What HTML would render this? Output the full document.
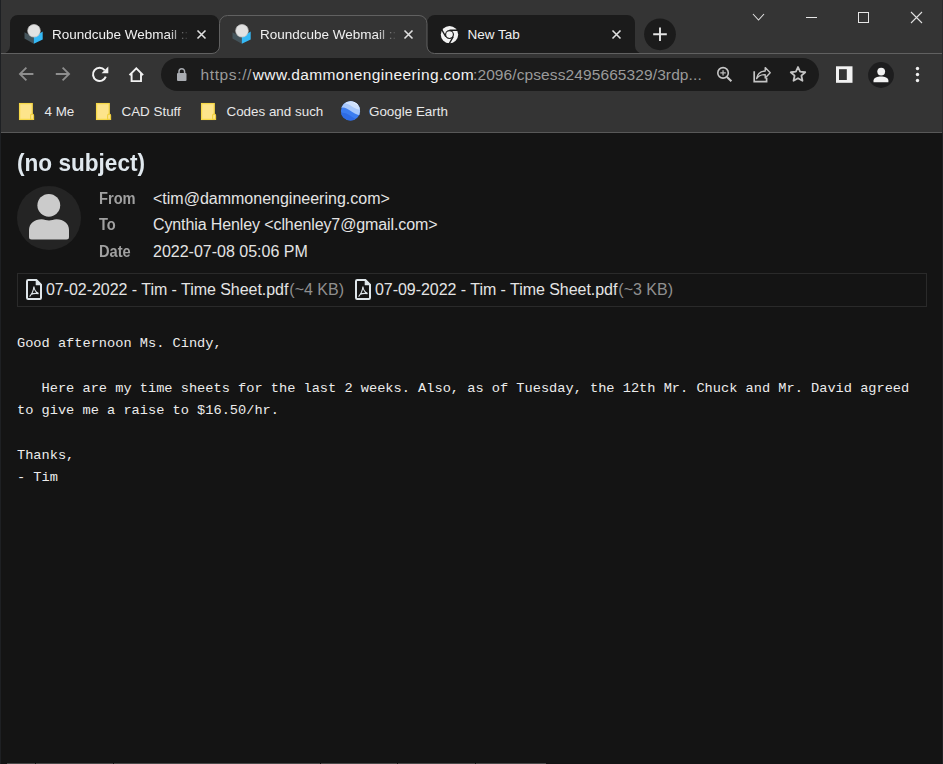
<!DOCTYPE html>
<html><head><meta charset="utf-8">
<style>
*{margin:0;padding:0;box-sizing:border-box}
html,body{width:943px;height:764px;overflow:hidden;background:#141414}
body{position:relative;font-family:"Liberation Sans",sans-serif}
.a{position:absolute;white-space:pre;line-height:1}
#chrome{position:absolute;left:0;top:0;width:943px;height:133px;background:#343434}
.t{color:#f0f0f0;font-size:13.5px}
.bm{color:#e8e8e8;font-size:13.4px}
.lbl{color:#a0a0a0;font-weight:bold;font-size:16px;transform:scaleX(0.915);transform-origin:0 0}
.val{color:#e4e4e4;font-size:16px}
.mono{font-family:"Liberation Mono",monospace;font-size:13.65px;color:#ececec}
</style></head><body>
<div id="chrome">
<svg width="943" height="133" style="position:absolute;left:0;top:0">
  <!-- window left border -->
  <rect x="0" y="0" width="1" height="764" fill="#1e2023"/>
  <!-- tab1 inactive -->
  <path d="M2.5,53.5 A7.5,7.5 0 0 0 10,46 L10,23 A8,8 0 0 1 18,15 L211,15 A8,8 0 0 1 219,23 L219,46 A7.5,7.5 0 0 0 226.5,53.5 Z" fill="#1b1b1b"/>
  <!-- tab3 inactive -->
  <path d="M419.5,53.5 A7.5,7.5 0 0 0 427,46 L427,23 A8,8 0 0 1 435,15 L627,15 A8,8 0 0 1 635,23 L635,46 A7.5,7.5 0 0 0 642.5,53.5 Z" fill="#1b1b1b"/>
  <!-- active tab -->
  <path d="M212,55 V53.5 A7.5,7.5 0 0 0 219.5,46 V23.5 A8,8 0 0 1 227.5,15.5 H419 A8,8 0 0 1 427,23.5 V46 A7.5,7.5 0 0 0 434.5,53.5 V55 Z" fill="#343434"/>
  <path d="M0,53.5 H212 A7.5,7.5 0 0 0 219.5,46 V23.5 A8,8 0 0 1 227.5,15.5 H419 A8,8 0 0 1 427,23.5 V46 A7.5,7.5 0 0 0 434.5,53.5 H943" fill="none" stroke="#616161" stroke-width="1"/>
  <!-- new tab button -->
  <circle cx="660" cy="34.3" r="15.9" fill="#1b1b1b"/>
  <path d="M660,27.5 V41 M653.2,34.3 H666.8" stroke="#e4e4e4" stroke-width="1.9"/>
  <!-- window controls -->
  <path d="M753,14 L758.5,20 L764,14" fill="none" stroke="#e0e0e0" stroke-width="1.1"/>
  <rect x="806" y="17" width="11" height="1" fill="#e6e6e6"/>
  <rect x="858.5" y="12.5" width="10" height="10" fill="none" stroke="#e6e6e6" stroke-width="1"/>
  <path d="M911,12 L922,23 M922,12 L911,23" stroke="#e0e0e0" stroke-width="1.1"/>
  <!-- tab close X -->
  <path d="M197.5,30.5 L205.5,38.5 M205.5,30.5 L197.5,38.5" stroke="#e0e0e0" stroke-width="1.6"/>
  <path d="M404.5,30.5 L412.5,38.5 M412.5,30.5 L404.5,38.5" stroke="#e0e0e0" stroke-width="1.6"/>
  <path d="M612.5,30.5 L620.5,38.5 M620.5,30.5 L612.5,38.5" stroke="#e0e0e0" stroke-width="1.6"/>
  <!-- nav icons -->
  <path d="M33.4,74 H20.2 M26.4,67.6 L19.9,74 L26.4,80.4" fill="none" stroke="#8e8e8e" stroke-width="1.8"/>
  <path d="M55.8,74 H69 M62.6,67.6 L69.1,74 L62.6,80.4" fill="none" stroke="#8e8e8e" stroke-width="1.8"/>
  <path d="M104.66,70.16 A6.6,6.6 0 1 0 105.8,76.66" fill="none" stroke="#f2f2f2" stroke-width="2"/>
  <path d="M101.6,73.3 L108.3,73.3 L108.3,66.6 Z" fill="#f2f2f2"/>
  <path d="M129.5,75.2 L136.3,68.3 L143.1,75.2 M131.6,73.3 V81.1 H141 V73.3" fill="none" stroke="#f2f2f2" stroke-width="1.9"/>
  <!-- omnibox -->
  <rect x="161" y="58" width="658" height="33" rx="16.5" fill="#1b1b1b"/>
  <path d="M179,73.5 V71.5 A2.8,2.8 0 0 1 184.6,71.5 V73.5" fill="none" stroke="#a9acb1" stroke-width="1.5"/>
  <rect x="177" y="73" width="9.5" height="8" rx="1" fill="#a9acb1"/>
  <!-- zoom -->
  <circle cx="723.05" cy="72.9" r="5.25" fill="none" stroke="#c6c6c6" stroke-width="1.6"/>
  <path d="M727,76.9 L731.4,81.3" stroke="#c6c6c6" stroke-width="2.1"/>
  <path d="M723.05,70.2 V75.6 M720.3,72.9 H725.8" stroke="#b8b8b8" stroke-width="1.3"/>
  <!-- share -->
  <path d="M754.2,71.2 V81.6 H766.6 V77.8" fill="none" stroke="#c4c4c4" stroke-width="1.7"/>
  <path d="M756.6,78.6 C757.4,73.6 760.4,71.2 765.2,71 V67.6 L770.2,72.8 L765.2,77.9 V74.6 C761.2,74.6 758.4,76 756.6,78.6 Z" fill="none" stroke="#c4c4c4" stroke-width="1.4" stroke-linejoin="round"/>
  <!-- star -->
  <path d="M798.00,67.00 L800.10,71.71 L805.23,72.25 L801.40,75.70 L802.47,80.75 L798.00,78.17 L793.53,80.75 L794.60,75.70 L790.77,72.25 L795.90,71.71 Z" fill="none" stroke="#c4c4c4" stroke-width="1.8" stroke-linejoin="round"/>
  <!-- side panel -->
  <rect x="836" y="66.3" width="16.5" height="16.5" fill="#f2f2f2"/>
  <rect x="839" y="69.2" width="7.8" height="10.8" fill="#343434"/>
  <!-- profile -->
  <circle cx="881" cy="75" r="12.9" fill="#1d1d1e"/>
  <circle cx="881.2" cy="71.6" r="3.9" fill="#f2f2f2"/>
  <path d="M873.5,82.3 V80.5 C873.5,77.8 877.5,76.4 881,76.4 C884.5,76.4 888.4,77.8 888.4,80.5 V82.3 Z" fill="#f2f2f2"/>
  <!-- menu -->
  <circle cx="917.5" cy="68.5" r="1.7" fill="#f0f0f0"/>
  <circle cx="917.5" cy="74.5" r="1.7" fill="#f0f0f0"/>
  <circle cx="917.5" cy="80.5" r="1.7" fill="#f0f0f0"/>
  <!-- bookmark folders -->
  <g id="fold"><rect x="19.6" y="103.6" width="12.6" height="15.8" fill="#fde48b" stroke="#f6d848" stroke-width="1.3"/><path d="M30.6,119.4 V115.6 A1.5,1.5 0 0 1 33.6,115.6 V119.4 Z" fill="#fde48b" stroke="#f0cf3c" stroke-width="1.1"/></g>
  <use href="#fold" x="77"/>
  <use href="#fold" x="182"/>
  <!-- google earth -->
  <clipPath id="ge"><circle cx="350.5" cy="110.9" r="9.6"/></clipPath>
  <g clip-path="url(#ge)">
   <rect x="340" y="100" width="22" height="22" fill="#3b7cf0"/>
   <path d="M340,108 C344,106.5 347,108.5 350,110.5 C353,112.5 357,115.5 362,115.5 V100 H340 Z" fill="#a8c8fb"/>
   <path d="M340,104 C345,102 349,104.5 352,106.5 C355,108.5 358,110 362,110 V100 H340 Z" fill="#cfe1fd"/>
   <path d="M344,100 C349,100 353,102 356,104 C358,105.5 360,106.5 362,106.5 V100 Z" fill="#eef5ff"/>
   <path d="M340,113 C344,112 347,113.5 350,115.5 C353,117.5 357,120.5 362,120.5 V122 H340 Z" fill="#2e6be4"/>
  </g>
  <!-- bookmarks bottom line -->
  <rect x="0" y="132" width="943" height="1" fill="#585858"/>
</svg>
<!-- tab favicons -->
<svg width="20" height="20" style="position:absolute;top:24px;left:23.5px">
  <path d="M0.5,8.3 L9.8,13.3 L9.8,19.8 L0.5,14.5 Z" fill="#44545b"/>
  <path d="M9.8,13.3 L18.7,7.5 L18.7,15.5 L9.8,19.8 Z" fill="#35b9f6"/>
  <circle cx="10" cy="6.8" r="6.3" fill="#e2e2e2" stroke="#c8c8c8" stroke-width="0.7"/>
</svg>
<svg width="20" height="20" style="position:absolute;top:24px;left:231.5px">
  <path d="M0.5,8.3 L9.8,13.3 L9.8,19.8 L0.5,14.5 Z" fill="#44545b"/>
  <path d="M9.8,13.3 L18.7,7.5 L18.7,15.5 L9.8,19.8 Z" fill="#35b9f6"/>
  <circle cx="10" cy="6.8" r="6.3" fill="#e2e2e2" stroke="#c8c8c8" stroke-width="0.7"/>
</svg>
<svg width="20" height="20" style="position:absolute;top:25px;left:440px">
  <circle cx="9.5" cy="9.6" r="8.7" fill="#f2f2f2"/>
  <circle cx="9.5" cy="9.6" r="4.5" fill="#1b1b1b"/>
  <circle cx="9.5" cy="9.6" r="3.3" fill="#f2f2f2"/>
  <path d="M9.5,5.3 H18.5 M5.8,11.75 L1.3,3.95 M13.2,11.75 L8.7,19.55" stroke="#1b1b1b" stroke-width="1.4"/>
</svg>
<div class="a t" style="left:52px;top:27.5px;width:140px;overflow:hidden;-webkit-mask-image:linear-gradient(to right,#000 116px,transparent 138px);mask-image:linear-gradient(to right,#000 116px,transparent 138px)">Roundcube Webmail :: Roundcube</div>
<div class="a t" style="left:260px;top:27.5px;width:140px;overflow:hidden;-webkit-mask-image:linear-gradient(to right,#000 116px,transparent 138px);mask-image:linear-gradient(to right,#000 116px,transparent 138px)">Roundcube Webmail :: Roundcube</div>
<div class="a t" style="left:467.5px;top:27.5px">New Tab</div>
<!-- url -->
<div class="a" style="left:200.5px;top:67px;font-size:15.5px;color:#9a9a9a;letter-spacing:0.62px">https://</div>
<div class="a" style="left:252.8px;top:67px;font-size:15.5px;color:#f2f2f2;letter-spacing:0.37px">www.dammonengineering.com</div>
<div class="a" style="left:473px;top:67px;font-size:15.5px;color:#9a9a9a;letter-spacing:0.1px">:2096/cpsess2495665329/3rdp...</div>
<!-- bookmarks -->
<div class="a bm" style="left:44.5px;top:105px">4 Me</div>
<div class="a bm" style="left:121.5px;top:105px">CAD Stuff</div>
<div class="a bm" style="left:226.5px;top:105px">Codes and such</div>
<div class="a bm" style="left:369px;top:105px">Google Earth</div>
</div>

<!-- content -->
<div class="a" style="left:17px;top:151px;font-size:24.5px;font-weight:bold;color:#e0e8ee;transform:scaleX(0.922);transform-origin:0 0">(no subject)</div>
<svg width="70" height="70" style="position:absolute;left:14px;top:183px">
  <circle cx="35" cy="35" r="32" fill="#242424"/>
  <circle cx="34.8" cy="22.3" r="11.4" fill="#cbcbcb"/>
  <path d="M15,54 A2.5,2.5 0 0 0 17.5,56.5 H52.5 A2.5,2.5 0 0 0 55,54 V47 C55,40.5 49.5,36.3 42.5,36.3 C39.5,36.3 37.5,37.6 35,37.6 C32.5,37.6 30.5,36.3 27.5,36.3 C20.5,36.3 15,40.5 15,47 Z" fill="#cbcbcb"/>
</svg>
<div class="a lbl" style="left:98.5px;top:191px">From</div>
<div class="a lbl" style="left:98.5px;top:217px">To</div>
<div class="a lbl" style="left:98.5px;top:244px">Date</div>
<div class="a val" style="left:153px;top:191px">&lt;tim@dammonengineering.com&gt;</div>
<div class="a val" style="left:153px;top:217px;letter-spacing:-0.11px">Cynthia Henley &lt;clhenley7@gmail.com&gt;</div>
<div class="a val" style="left:153px;top:244px">2022-07-08 05:06 PM</div>

<div style="position:absolute;left:17px;top:273px;width:910px;height:34px;border:1px solid #2a2a2a"></div>
<svg width="20" height="24" style="position:absolute;left:24px;top:277px">
  <g id="pdf" fill="none" stroke="#dfe6ea" stroke-linejoin="round">
    <path d="M3,4.2 A1.2,1.2 0 0 1 4.2,3 H12.3 L17,7.7 V20.8 A1.2,1.2 0 0 1 15.8,22 H4.2 A1.2,1.2 0 0 1 3,20.8 Z" stroke-width="2"/>
    <path d="M12.3,3 V7.7 H17 Z" fill="#dfe6ea" stroke-width="1.2"/>
    <path d="M9.9,9.5 C9.7,12.5 8.2,16.5 5.6,19.6 M9.9,9.5 C10.2,12.5 12,15.2 14.6,16.6 M6.8,17.6 C9.2,16.3 12,16.1 14.6,16.6" stroke-width="1.1"/>
  </g>
</svg>
<svg width="20" height="24" style="position:absolute;left:353px;top:277px">
  <use href="#pdf"/>
</svg>
<div class="a val" style="left:46px;top:282px;letter-spacing:-0.04px">07-02-2022 - Tim - Time Sheet.pdf</div>
<div class="a val" style="left:289.3px;top:282px;color:#8f8f8f">(~4 KB)</div>
<div class="a val" style="left:375px;top:282px;letter-spacing:-0.04px">07-09-2022 - Tim - Time Sheet.pdf</div>
<div class="a val" style="left:618.3px;top:282px;color:#8f8f8f">(~3 KB)</div>

<div class="a mono" style="left:17px;top:333px;line-height:22.4px">Good afternoon Ms. Cindy,

   Here are my time sheets for the last 2 weeks. Also, as of Tuesday, the 12th Mr. Chuck and Mr. David agreed
to give me a raise to $16.50/hr.

Thanks,
- Tim</div>
<div style="position:absolute;left:7px;top:763px;width:539px;height:1px;background:#4a4a4a"></div>
<div style="position:absolute;left:35px;top:763px;width:1px;height:1px;background:#141414"></div>
<div style="position:absolute;left:113px;top:763px;width:1px;height:1px;background:#141414"></div>
<div style="position:absolute;left:320px;top:763px;width:1px;height:1px;background:#141414"></div>
<div style="position:absolute;left:397px;top:763px;width:1px;height:1px;background:#141414"></div>
<div style="position:absolute;left:475px;top:763px;width:1px;height:1px;background:#141414"></div>
<div style="position:absolute;left:942px;top:0;width:1px;height:133px;background:#2a2a2d"></div>
<div style="position:absolute;left:942px;top:133px;width:1px;height:631px;background:#202023"></div>
<div style="position:absolute;left:0;top:0;width:1px;height:764px;background:#1e2023"></div>
</body></html>
